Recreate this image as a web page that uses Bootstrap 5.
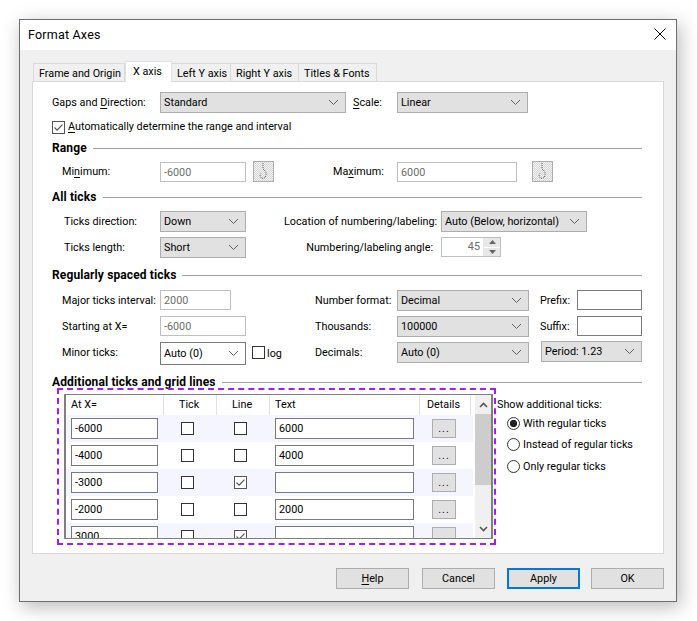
<!DOCTYPE html>
<html lang="en">
<head>
<meta charset="utf-8">
<title>Format Axes</title>
<link href="https://cdn.jsdelivr.net/npm/bootstrap@5.3.0/dist/css/bootstrap.min.css" rel="stylesheet">
<style>
html,body{height:100%}
body{background:#fff;font-family:Roboto,"Noto Sans",sans-serif;font-size:10.8px;line-height:16px;color:#000;overflow:hidden}
.dlg{margin:19px 0 0 19px;width:658px;height:583px;background:#f0f0f0;border:1px solid #6e6e6e;box-shadow:3px 5px 18px rgba(0,0,0,.28)}
.dlg-title{height:30px;background:#fff;padding:6px 9px 0 8px;font-size:12.5px;line-height:18px;letter-spacing:.2px}
.x-close{width:12px;height:12px;margin:2px 1px 0 0}
.tabstrip{height:31px;padding:12px 0 0 13px;border:0;flex-wrap:nowrap}
.tabstrip .nav-link{height:19px;margin-top:1px;padding:1px 5px 0;border:1px solid #d9d9d9;border-bottom:0;border-left-width:0;border-radius:0;background:#f0f0f0;color:#000;font-size:10.8px;line-height:18px;white-space:nowrap}
.tabstrip .t1{width:92px;border-left-width:1px}.tabstrip .t2{width:47px;height:21px;margin-top:-1px;background:#fff;padding:1px 7px;position:relative;z-index:1;border-left-width:1px}.tabstrip .t3{width:59px}.tabstrip .t4{width:68px}.tabstrip .t5{width:78px}
.pane{width:632px;height:473px;margin-left:12px;background:#fff;border:1px solid #d9d9d9;padding:10px 21px 0 19px}
.fr{display:flex;align-items:flex-start;height:21px}
.fr-tall{height:23px}
.m4{margin-top:4px}.m5{margin-top:5px}.m6{margin-top:6px}.m7{margin-top:7px}.m9{margin-top:9px}
.lb{line-height:22px;white-space:nowrap;flex:none}
.in1{padding-left:10px;width:108px}
.in2{padding-left:12px;width:108px}
.form-select.ctl{height:21px;min-height:0;padding:1px 0 0 3px;border:1px solid #adadad;border-radius:0;background-color:#e1e1e1;font-size:10.8px;line-height:18px;color:#000;box-shadow:none;flex:none;background-size:11px 7px;background-position:right 6px center;background-image:url("data:image/svg+xml,%3Csvg xmlns='http://www.w3.org/2000/svg' viewBox='0 0 11 7'%3E%3Cpath d='M1 1l4.500 4.500L10 1' fill='none' stroke='%23606060'/%3E%3C/svg%3E")}
.form-select.on{background-color:#fff;border-color:#7a7a7a;height:23px}
.form-control.ed{height:20px;min-height:0;padding:1px 3px 0;border:1px solid #7a7a7a;border-radius:0;font-size:10.8px;line-height:17px;color:#000;background:#fff;box-shadow:none;flex:none}
.form-control.ed:disabled{border-color:#bfbfbf;color:#6d6d6d;opacity:1;background:#fff}
.t1px{margin-top:1px}
.hd{display:flex;align-items:center;height:16px;font-size:12px;font-weight:700;letter-spacing:.12px;white-space:nowrap}
.hd::after{content:"";flex:1;border-top:1px solid #a0a0a0;margin-left:6px}
.hook{width:21px;height:21px;flex:none;border:1px solid #adadad;background-color:#e4e4e4;background-image:repeating-conic-gradient(#f4f4f4 0 25%,#d4d4d4 0 50%);background-size:2px 2px;padding:0;display:flex;align-items:center;justify-content:center}
.ck{width:13px;height:13px;flex:none;display:block;margin:0;border:1px solid #333;border-radius:0;appearance:none;background:#fff}
.ck:checked{border-color:#555;background-color:#fff;background-repeat:no-repeat;background-position:center;background-size:11px 11px;background-image:url("data:image/svg+xml,%3Csvg xmlns='http://www.w3.org/2000/svg' viewBox='0 0 11 11'%3E%3Cpath d='M1.500 5.500l2.600 2.600L9.500 2.600' fill='none' stroke='%23555' stroke-width='1.200'/%3E%3C/svg%3E")}
.spin{width:60px;height:20px;flex:none;display:flex;border:1px solid #bfbfbf;color:#6d6d6d}
.spin-v{flex:1;text-align:right;padding-right:3px;line-height:18px}
.spin-b{width:17px;display:flex;flex-direction:column;gap:1px;background:#fff;border-left:1px solid #e6e6e6}
.spin-b i{flex:1;background:#e8e8e8;display:flex;align-items:center;justify-content:center}
.dash{width:439px;height:157px;margin:-2px 0 0 5px;border:2px dashed #a01ef0;padding:4px 0 0 5px;flex:none}
.grid-box{width:429px;height:145px;border:1px solid #7f7f7f;border-left-width:2px;border-right-width:2px;display:flex;background:#fff;overflow:hidden}
.g-main{width:409px;flex:none;overflow:hidden}
.g-row{display:grid;grid-template-columns:97px 53px 53px 150px 54px;height:27px;width:407px;padding-top:3px}
.g-row:nth-child(odd){background:#f4f5fe}
.g-head{height:20px;display:grid;grid-template-columns:98px 53px 53px 150px 51px;width:407px;line-height:19px}
.g-head>div{border-right:1px solid #e0e0e0;height:20px;white-space:nowrap}
.p5{padding-left:5px}.p15{padding-left:15px}.p7{padding-left:7px}
.form-control.g-id{width:87px;height:21px;margin-left:5px;padding-top:0}
.form-control.g-tx{width:139px;height:21px;margin-left:6px;padding-top:0}
.g-ck{margin:4px 0 0 18px}
.g-bt{width:24px;height:19px;margin:1px 0 0 13px;border:1px solid #adadad;background:#e1e1e1;padding:0;border-radius:0;font-size:10.8px;line-height:14px;color:#300050;letter-spacing:1px}
.sb{width:16px;flex:none;background:#f0f0f0;display:flex;flex-direction:column;align-items:center;margin-right:2px}
.sb-a{height:19px;display:flex;align-items:center;justify-content:center;flex:none}
.sb-t{height:71px;width:16px;background:#cdcdcd;flex:none}
.sb-s{flex:1}
.side{padding:7px 0 0 1px;white-space:nowrap}
.side-l{line-height:16px;height:16px}
.rd{display:flex;align-items:center;margin-left:10px;gap:3px;height:21px}
.rd-3{margin-top:1px}
.rd input{width:13px;height:13px;margin:0;flex:none;appearance:none;border:1px solid #333;border-radius:50%;background:#fff}
.rd input:checked{background:radial-gradient(circle,#222 0 3.400px,#fff 3.900px)}
.foot{padding:14px 12px 0 0;justify-content:flex-end;gap:13px}
.btn.wb{width:73px;height:21px;padding:0;border:1px solid #adadad;border-radius:0;background:#e1e1e1;color:#000;font-size:10.8px;line-height:19px}
.btn.wb.def{border:2px solid #0078d7;line-height:17px;margin:0 -2px 0 -1px}
u{text-underline-offset:2px;text-decoration-thickness:1px}
.w86{width:86px}.w71{width:71px}.w186{width:186px}.w131{width:131px}.w120{width:120px}.w132{width:132px}.w146{width:146px}.w65{width:65px}.w101{width:101px}
.gap7{margin-left:7px}.ml15{margin-left:15px}
.lb-gaps{width:108px}
.lb-sc{width:44px;margin-left:7px}
.lb-max{width:64px;margin-left:59px}
.lb-loc{width:157px;margin-left:38px;padding-right:8px;text-align:right}
.lb-fmt{width:82px}
.ml84{margin-left:84px}.ml69{margin-left:69px}.ml26{margin-left:26px}
.lb-pre{width:37px;margin-left:11px}
.lb-log{width:22px;margin-left:2px;line-height:24px}
.ck-log{margin:4px 0 0 6px}
.per{margin-left:12px;margin-top:-1px}
.auto{margin-top:7px;height:14px;align-items:center;gap:3px}
</style>
</head>
<body>
<div class="dlg d-flex flex-column">
  <div class="dlg-title d-flex justify-content-between align-items-start">
    <span>Format Axes</span>
    <svg class="x-close" viewBox="0 0 12 12"><path d="M.5.5l11 11M11.500.5l-11 11" stroke="#000" fill="none"/></svg>
  </div>
  <ul class="nav nav-tabs tabstrip">
    <li class="nav-item"><a class="nav-link t1">Frame and Origin</a></li>
    <li class="nav-item"><a class="nav-link t2 active">X axis</a></li>
    <li class="nav-item"><a class="nav-link t3">Left Y axis</a></li>
    <li class="nav-item"><a class="nav-link t4">Right Y axis</a></li>
    <li class="nav-item"><a class="nav-link t5">Titles &amp; Fonts</a></li>
  </ul>
  <div class="pane">
    <div class="fr">
      <div class="lb lb-gaps">Gaps and <u>D</u>irection:</div>
      <select class="form-select ctl w186"><option>Standard</option></select>
      <div class="lb lb-sc"><u>S</u>cale:</div>
      <select class="form-select ctl w131"><option>Linear</option></select>
    </div>
    <div class="fr auto"><input type="checkbox" class="ck" checked><span class="lb"><u>A</u>utomatically determine the range and interval</span></div>
    <div class="hd m6">Range</div>
    <div class="fr m5">
      <div class="lb in1">Mi<u>n</u>imum:</div>
      <input class="form-control ed w86 t1px" disabled value="-6000">
      <button class="hook gap7"><svg width="9" height="17" viewBox="0 0 9 17"><path d="M4 0v5M4 6c3 2 3.500 4 3 6.500S4 16 2.500 15 .5 12 2 10.500" fill="none" stroke="#556" stroke-dasharray="1 1"/></svg></button>
      <div class="lb lb-max">Ma<u>x</u>imum:</div>
      <input class="form-control ed w120 t1px" disabled value="6000">
      <button class="hook ml15"><svg width="9" height="17" viewBox="0 0 9 17"><path d="M4 0v5M4 6c3 2 3.500 4 3 6.500S4 16 2.500 15 .5 12 2 10.500" fill="none" stroke="#556" stroke-dasharray="1 1"/></svg></button>
    </div>
    <div class="hd m7">All ticks</div>
    <div class="fr m6">
      <div class="lb in2">Ticks direction:</div>
      <select class="form-select ctl w86"><option>Down</option></select>
      <div class="lb lb-loc">Location of numbering/labeling:</div>
      <select class="form-select ctl w146"><option>Auto (Below, horizontal)</option></select>
    </div>
    <div class="fr m5">
      <div class="lb in2">Ticks length:</div>
      <select class="form-select ctl w86"><option>Short</option></select>
      <div class="lb lb-loc">Numbering/labeling angle:</div>
      <div class="spin"><div class="spin-v">45</div><div class="spin-b"><i><svg width="7" height="4"><path d="M0 4h7L3.500 0z" fill="#666"/></svg></i><i><svg width="7" height="4"><path d="M0 0h7L3.500 4z" fill="#666"/></svg></i></div></div>
    </div>
    <div class="hd m9">Regularly spaced ticks</div>
    <div class="fr m7">
      <div class="lb in1">Major ticks interval:</div>
      <input class="form-control ed w71" disabled value="2000">
      <div class="lb lb-fmt ml84">Number format:</div>
      <select class="form-select ctl w132"><option>Decimal</option></select>
      <div class="lb lb-pre">Prefix:</div>
      <input class="form-control ed w65" value="">
    </div>
    <div class="fr m5">
      <div class="lb in1">Starting at X=</div>
      <input class="form-control ed w86" disabled value="-6000">
      <div class="lb lb-fmt ml69">Thousands:</div>
      <select class="form-select ctl w132"><option>100000</option></select>
      <div class="lb lb-pre">Suffix:</div>
      <input class="form-control ed w65" value="">
    </div>
    <div class="fr fr-tall m5">
      <div class="lb in1">Minor ticks:</div>
      <select class="form-select ctl on w86"><option>Auto (0)</option></select>
      <input type="checkbox" class="ck ck-log"><span class="lb lb-log">log</span>
      <div class="lb lb-fmt ml26">Decimals:</div>
      <select class="form-select ctl w132"><option>Auto (0)</option></select>
      <select class="form-select ctl w101 per"><option>Period: 1.23</option></select>
    </div>
    <div class="hd m9">Additional ticks and grid lines</div>
    <div class="d-flex">
      <div class="dash">
        <div class="grid-box">
          <div class="g-main">
            <div class="g-head"><div class="p5">At X=</div><div class="p15">Tick</div><div class="p15">Line</div><div class="p5">Text</div><div class="p7">Details</div></div>
            <div>
              <div class="g-row"><input class="form-control ed g-id" value="-6000"><input type="checkbox" class="ck g-ck"><input type="checkbox" class="ck g-ck"><input class="form-control ed g-tx" value="6000"><button class="g-bt">...</button></div>
              <div class="g-row"><input class="form-control ed g-id" value="-4000"><input type="checkbox" class="ck g-ck"><input type="checkbox" class="ck g-ck"><input class="form-control ed g-tx" value="4000"><button class="g-bt">...</button></div>
              <div class="g-row"><input class="form-control ed g-id" value="-3000"><input type="checkbox" class="ck g-ck"><input type="checkbox" class="ck g-ck" checked><input class="form-control ed g-tx" value=""><button class="g-bt">...</button></div>
              <div class="g-row"><input class="form-control ed g-id" value="-2000"><input type="checkbox" class="ck g-ck"><input type="checkbox" class="ck g-ck"><input class="form-control ed g-tx" value="2000"><button class="g-bt">...</button></div>
              <div class="g-row"><input class="form-control ed g-id" value="3000"><input type="checkbox" class="ck g-ck"><input type="checkbox" class="ck g-ck" checked><input class="form-control ed g-tx" value=""><button class="g-bt"></button></div>
            </div>
          </div>
          <div class="sb">
            <div class="sb-a"><svg width="9" height="6" viewBox="0 0 9 6"><path d="M1 5l3.500-3.500L8 5" fill="none" stroke="#555" stroke-width="1.600"/></svg></div>
            <div class="sb-t"></div>
            <div class="sb-s"></div>
            <div class="sb-a"><svg width="9" height="6" viewBox="0 0 9 6"><path d="M1 1l3.500 3.500L8 1" fill="none" stroke="#555" stroke-width="1.600"/></svg></div>
          </div>
        </div>
      </div>
      <div class="side">
        <div class="side-l">Show additional ticks:</div>
        <label class="rd"><input type="radio" name="r" checked><span>With regular ticks</span></label>
        <label class="rd"><input type="radio" name="r"><span>Instead of regular ticks</span></label>
        <label class="rd rd-3"><input type="radio" name="r"><span>Only regular ticks</span></label>
      </div>
    </div>
  </div>
  <div class="d-flex foot">
    <button class="btn wb"><u>H</u>elp</button>
    <button class="btn wb">Cancel</button>
    <button class="btn wb def">Apply</button>
    <button class="btn wb">OK</button>
  </div>
</div>
<script src="https://cdn.jsdelivr.net/npm/bootstrap@5.3.0/dist/js/bootstrap.bundle.min.js"></script>
</body>
</html>
